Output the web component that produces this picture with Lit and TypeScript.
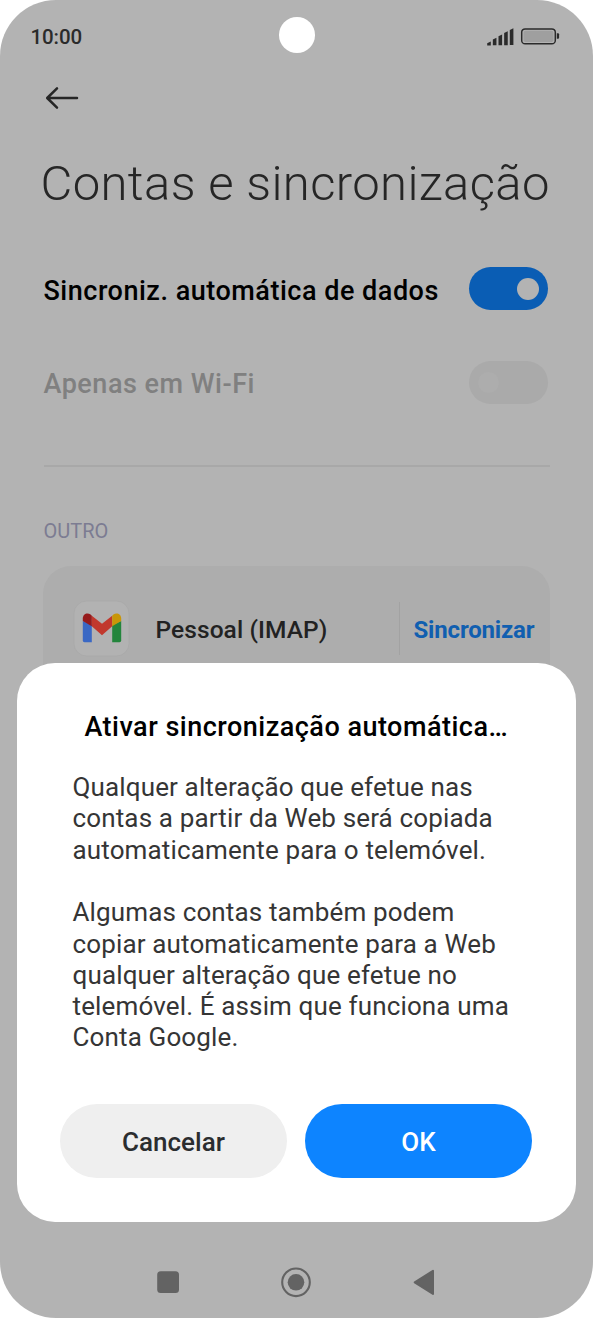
import { LitElement, html, css, svg } from "lit";
import { customElement, property } from "lit/decorators.js";

@customElement("toggle-switch")
class ToggleSwitch extends LitElement {
  @property({ type: Boolean, reflect: true }) on = false;
  static styles = css`
    :host { display: flex; align-items: center; box-sizing: border-box; width: 79px; height: 43px;
      border-radius: 22px; background: #aaa; padding: 0 9px; }
    :host([on]) { background: #0a5db4; justify-content: flex-end; }
    .knob { width: 21px; height: 21px; border-radius: 50%; background: #adadad; }
    :host([on]) .knob { width: 22px; height: 22px; background: #b3b3b3; }
  `;
  render() {
    return html`<div class="knob"></div>`;
  }
}

@customElement("app-root")
class AppRoot extends LitElement {
  static styles = css`
    :host { display: block; width: 593px; height: 1318px; background: #fff;
      font-family: Roboto, "Liberation Sans", sans-serif; }
    .phone { position: relative; width: 593px; height: 1318px; box-sizing: border-box; overflow: hidden;
      border-radius: 56px; background: #b3b3b3; display: flex; flex-direction: column; }
    .camera { position: absolute; left: 278.5px; top: 17px; width: 36.5px; height: 36px; border-radius: 50%; background: #fff; }
    .status { display: flex; justify-content: space-between; align-items: center; height: 74px; padding: 0 33px 0 30.5px; }
    .clock { font-size: 20.5px; font-weight: 500; line-height: 24px; letter-spacing: -0.1px; color: #2b2b2b; }
    svg { display: block; }
    .back { height: 48px; padding-left: 44px; display: flex; align-items: center; }
    h1 { margin: 22px 0 0; padding-left: 40.5px; height: 80px; line-height: 80px; font-size: 49px; font-weight: 300;
      letter-spacing: 0.38px; color: #262626; white-space: nowrap; }
    .settings { padding: 43px 44px 0; }
    .row { display: flex; justify-content: space-between; align-items: center; height: 43px; margin-bottom: 51px;
      width: 504px; font-size: 27px; font-weight: 500; letter-spacing: 0.51px; color: #000; white-space: nowrap; }
    .row span { padding-top: 4px; margin-left: -0.5px; }
    .row.off { color: #808080; margin-bottom: 61px; }
    .row.off span { padding-top: 2px; }
    .rule { height: 1.5px; width: 506px; background: #a8a8a8; }
    .group { padding: 50px 0 0 43.5px; font-size: 20px; line-height: 28px; color: #7c7c92; }
    .card { margin: 21px 43px 0; height: 150px; border-radius: 28px; background: #adadad; display: flex;
      align-items: flex-start; }
    .gmail { margin: 34px 0 0 30px; }
    .name { margin: 48px 0 0 25.5px; width: 243.5px; font-size: 24.5px; line-height: 32px; font-weight: 500;
      letter-spacing: 0.08px; color: #222; }
    .bar { margin-top: 36px; width: 1px; height: 53px; background: #a2a2a2; }
    .sync { margin: 48px 0 0 13.5px; font-size: 24px; line-height: 32px; font-weight: 700; letter-spacing: -0.17px; color: #115fb0; }
    .dialog { position: absolute; left: 16.5px; top: 663px; width: 559.5px; height: 559px; box-sizing: border-box;
      border-radius: 38px; background: #fff; padding: 45px 43.5px 0; }
    h2 { margin: 0; text-align: center; font-size: 27px; line-height: 38px; font-weight: 500; letter-spacing: 0.49px; color: #000;
      white-space: nowrap; }
    p { margin: 0 0 31.3px; padding-left: 12.5px; font-size: 26px; line-height: 31.3px; letter-spacing: 0.14px; color: #353535; white-space: nowrap; }
    .first { margin-top: 26.1px; }
    .actions { display: flex; gap: 18px; margin-top: 49.9px; }
    button { font: inherit; font-size: 26px; font-weight: 500; border: 0; padding: 2px 0 0; width: 227px; height: 74px;
      border-radius: 37px; background: #efefef; color: #2b2d2f; letter-spacing: 0.05px; }
    .primary { background: #0d84ff; color: #fff; }
    .nav { margin-top: auto; height: 71px; }
  `;

  render() {
    return html`
      <div class="phone">
        <div class="camera"></div>
        <div class="status">
          <span class="clock">10:00</span>
          <svg width="73" height="20" viewBox="487 27 73 20">
            <g fill="#2b2b2b">
              ${[[41.4, 4], [37.7, 7.5], [34.4, 10.8], [31.2, 14], [28.3, 16.8]].map(
                ([y, h], i) => svg`<path d=${`M${487.2 + i * 5.65} ${y + 1.8}l3.6 -1.8v${h}h-3.6z`} />`
              )}
              <path d="M556.8 33.2h1.2q1.1 0 1.1 1.1v3.4q0 1.1-1.1 1.1h-1.2z" />
            </g>
            <rect x="521.7" y="28.9" width="33.6" height="14.9" rx="3.4" fill="none" stroke="#2b2b2b" stroke-width="1.5" />
            <rect x="523.6" y="30.7" width="29.8" height="11.3" rx="1.8" fill="#9f9f9f" />
          </svg>
        </div>
        <div class="back">
          <svg width="36" height="26" viewBox="44 85 36 26" fill="none" stroke="#262626" stroke-width="2.5"
            stroke-linecap="round" stroke-linejoin="round">
            <path d="M77 98H47.5M57 88.3L47.2 98L57 107.7" />
          </svg>
        </div>
        <h1>Contas e sincronização</h1>
        <div class="settings">
          <div class="row"><span>Sincroniz. automática de dados</span><toggle-switch on></toggle-switch></div>
          <div class="row off"><span>Apenas em Wi-Fi</span><toggle-switch></toggle-switch></div>
          <div class="rule"></div>
        </div>
        <div class="group">OUTRO</div>
        <div class="card">
          <svg class="gmail" width="57" height="57" viewBox="0 0 57 57">
            <rect x="1" y="1" width="55" height="55" rx="12.5" fill="#b2b2b2" stroke="#a8a8a8" stroke-width=".8" />
            <path fill="#3a68c4" d="M9.8 21v19.6q0 1.7 1.7 1.7h7.3V25z" />
            <path fill="#23853c" d="M39.2 25v17.3h7.3q1.7 0 1.7-1.7V21z" />
            <path fill="#c1382d" d="M18.8 19.2v-3.5L29 23.8l10.2-8.1v10.5L29 35.2 18.8 26.2z" />
            <path fill="#961b1c" d="M9.8 21v-2.6c0-4.4 4.6-6.5 7.8-3.8l1.2 1.1v10.6z" />
            <path fill="#c89608" d="M48.2 21v-2.6c0-4.4-4.6-6.5-7.8-3.8l-1.2 1.1v10.6z" />
          </svg>
          <div class="name">Pessoal (IMAP)</div>
          <div class="bar"></div>
          <div class="sync">Sincronizar</div>
        </div>
        <section class="dialog">
          <h2>Ativar sincronização automática…</h2>
          <p class="first">Qualquer alteração que efetue nas<br />contas a partir da Web será copiada<br />automaticamente para o telemóvel.</p>
          <p>Algumas contas também podem<br />copiar automaticamente para a Web<br />qualquer alteração que efetue no<br />telemóvel. É assim que funciona uma<br />Conta Google.</p>
          <div class="actions">
            <button>Cancelar</button>
            <button class="primary">OK</button>
          </div>
        </section>
        <svg class="nav" width="593" height="71" viewBox="0 1247 593 71" fill="#636363">
          <rect x="157.2" y="1271.3" width="21.8" height="21.8" rx="3.5" />
          <circle cx="296" cy="1282.3" r="13.8" fill="none" stroke="#636363" stroke-width="2.1" />
          <circle cx="296" cy="1282.3" r="8.3" />
          <path d="M414.7 1282.3L433 1270.8V1294z" stroke="#636363" stroke-width="2" stroke-linejoin="round" />
        </svg>
      </div>
    `;
  }
}
